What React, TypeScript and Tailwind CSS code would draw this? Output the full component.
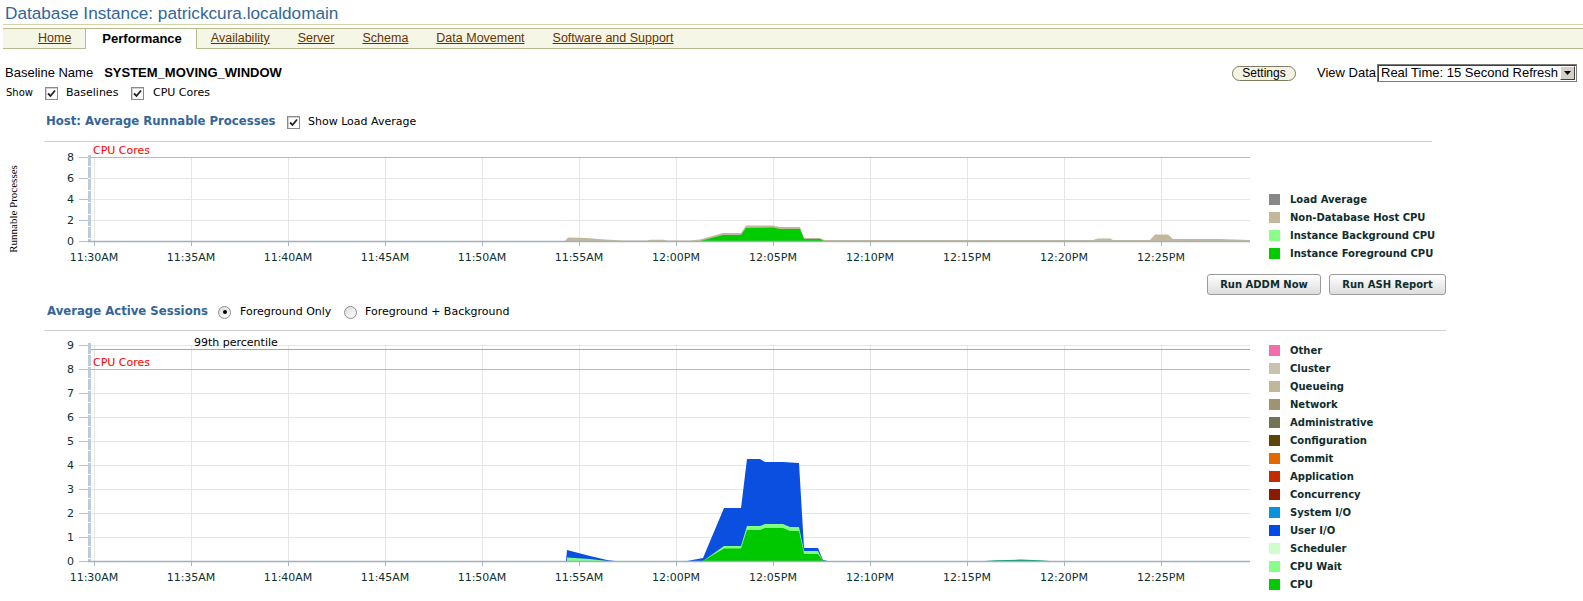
import React from "react";

const TIMES = ["11:30AM","11:35AM","11:40AM","11:45AM","11:50AM","11:55AM","12:00PM","12:05PM","12:10PM","12:15PM","12:20PM","12:25PM"];
const gx = (i: number) => 94 + 97 * i;
const P = (a: number[][]) => a.map((p) => p.join(",")).join(" ");
const V = "'DejaVu Sans', Verdana, sans-serif";
const AX = "#0f3030";

function Grid({ y0, unit, vals, top }: { y0: number; unit: number; vals: number[]; top: number }) {
  return (
    <g>
      {vals.filter((v) => v > 0).map((v) => (
        <line key={"h" + v} x1={90} x2={1250} y1={y0 - v * unit + 0.5} y2={y0 - v * unit + 0.5} stroke="#e6e6e6" />
      ))}
      {TIMES.map((_, i) => (
        <line key={"v" + i} x1={gx(i) + 0.5} x2={gx(i) + 0.5} y1={top} y2={y0} stroke="#e6e6ea" />
      ))}
    </g>
  );
}

function Axes({ y0, unit, vals, top }: { y0: number; unit: number; vals: number[]; top: number }) {
  return (
    <g>
      <line x1={89.5} x2={89.5} y1={top - 2} y2={y0 + 1} stroke="#bccada" strokeWidth={3} strokeDasharray="11 1" />
      <line x1={88} x2={1250} y1={y0 + 0.5} y2={y0 + 0.5} stroke="#a3afbd" strokeWidth={1.5} />
      {vals.map((v) => (
        <g key={v}>
          <line x1={79} x2={88} y1={y0 - v * unit + 0.5} y2={y0 - v * unit + 0.5} stroke="#b4c3d3" />
          <text x={74} y={y0 - v * unit + 4} textAnchor="end" fontFamily={V} fontSize={11} fill={AX}>{v}</text>
        </g>
      ))}
      {TIMES.map((t, i) => (
        <g key={t}>
          <line x1={gx(i) + 0.5} x2={gx(i) + 0.5} y1={y0 + 1} y2={y0 + 5} stroke="#a9b8c8" />
          <text x={gx(i)} y={y0 + 20} textAnchor="middle" fontFamily={V} fontSize={11} fill={AX}>{t}</text>
        </g>
      ))}
    </g>
  );
}

function Chart1() {
  const y0 = 241;
  const unit = 10.5;
  const tan = [[90,241],[565,241],[568,237.5],[587,238],[605,239.5],[623,240.5],[647,240.5],[650,239.8],[664,239.8],[667,240.5],[690,240.5],[700,239.5],[723,233],[741,233],[746,225.5],[773,225.5],[780,227],[800,227],[804,238],[820,238],[824,240],[1000,240],[1093,240],[1098,238.5],[1110,238.5],[1113,240],[1150,240],[1155,234.5],[1168,234.5],[1173,239],[1220,239],[1250,240],[1250,241]];
  const green = [[700,241],[723,235],[741,235],[746,228],[773,227.5],[780,229],[800,229],[804,239],[820,239],[824,241]];
  return (
    <svg width={1262} height={128} viewBox="0 142 1262 128" className="block shrink-0">
      <text transform="rotate(-90 17 209)" x={17} y={209} textAnchor="middle" fontFamily="'Liberation Serif', serif" fontSize={11} fill="#000">Runnable Processes</text>
      <Grid y0={y0} unit={unit} vals={[2, 4, 6]} top={157} />
      <line x1={90} x2={1250} y1={157.5} y2={157.5} stroke="#f2a0a0" />
      <text x={93} y={154} fontFamily={V} fontSize={11} fill="#ff0000">CPU Cores</text>
      <polygon points={P(tan)} fill="#c4b89c" />
      <polygon points={P(green)} fill="#00cc00" />
      <Axes y0={y0} unit={unit} vals={[0, 2, 4, 6, 8]} top={157} />
    </svg>
  );
}

function Chart2() {
  const y0 = 561;
  const unit = 24;
  const blueA = [[566,561],[567,550],[590,556],[607,560],[615,561]];
  const lgA = [[567,561],[567,557.5],[590,559],[607,561]];
  const blue = [[687,561],[703,558],[724,508],[741,508],[747,459],[760,459],[765,462],[783,462],[799,463],[804,548],[818,548],[823,560],[828,561]];
  const lg = [[703,561],[724,546],[741,546],[747,526],[760,526],[765,524],[783,524],[790,527],[799,527],[804,551],[818,551],[823,561]];
  const g = [[703,561],[724,548.5],[741,548.5],[747,530],[760,530],[765,528],[783,528],[790,531],[799,531],[804,554],[818,554],[823,561]];
  const teal = [[985,561],[995,560.2],[1020,559.6],[1040,560.2],[1050,561]];
  return (
    <svg width={1262} height={270} viewBox="0 331 1262 270" className="block shrink-0">
      <Grid y0={y0} unit={unit} vals={[1, 2, 3, 4, 5, 6, 7, 8, 9]} top={345} />
      <line x1={90} x2={1250} y1={349.5} y2={349.5} stroke="#a6a6a6" />
      <text x={194} y={346} fontFamily={V} fontSize={11} fill="#000">99th percentile</text>
      <line x1={90} x2={1250} y1={369.5} y2={369.5} stroke="#f2a0a0" />
      <text x={93} y={366} fontFamily={V} fontSize={11} fill="#ff0000">CPU Cores</text>
      <polygon points={P(blueA)} fill="#0a4fe0" />
      <polygon points={P(lgA)} fill="#80ff80" />
      <polygon points={P(blue)} fill="#0a4fe0" />
      <polygon points={P(lg)} fill="#80ff80" />
      <polygon points={P(g)} fill="#00c800" />
      <polygon points={P(teal)} fill="#009a70" />
      <Axes y0={y0} unit={unit} vals={[0, 1, 2, 3, 4, 5, 6, 7, 8, 9]} top={345} />
    </svg>
  );
}

function Check() {
  return (
    <span className="inline-flex w-[13px] h-[13px] shrink-0 items-center justify-center border border-[#8a8a8a] bg-white shadow-[inset_1px_1px_0_#d0d0d0]">
      <svg width="9" height="9" viewBox="0 0 9 9">
        <path d="M1 4.5 L3.5 7 L8 1.5" fill="none" stroke="#222" strokeWidth="1.8" />
      </svg>
    </span>
  );
}

function Radio({ on }: { on?: boolean }) {
  return (
    <span className="inline-flex w-[13px] h-[13px] shrink-0 items-center justify-center rounded-full border border-[#8c8c8c] bg-gradient-to-br from-[#dcdcdc] to-white">
      {on ? <span className="w-[4px] h-[4px] rounded-full bg-black" /> : null}
    </span>
  );
}

function Legend({ items }: { items: [string, string][] }) {
  return (
    <div className="flex flex-col">
      {items.map(([label, color]) => (
        <div key={label} className="h-[18px] flex items-center">
          <span className="w-[11px] h-[11px] shrink-0" style={{ backgroundColor: color }} />
          <span className="ml-[10px] text-[10px] font-bold text-[#0f2d2d] font-['DejaVu_Sans',Verdana,sans-serif] whitespace-nowrap">{label}</span>
        </div>
      ))}
    </div>
  );
}

function Tab({ children }: { children: React.ReactNode }) {
  return <a className="px-[14px] flex items-center text-[#663300] underline whitespace-nowrap">{children}</a>;
}

export default function App() {
  const legend1: [string, string][] = [
    ["Load Average", "#878787"],
    ["Non-Database Host CPU", "#c4b89c"],
    ["Instance Background CPU", "#88ff88"],
    ["Instance Foreground CPU", "#00cc00"],
  ];
  const legend2: [string, string][] = [
    ["Other", "#f26ea8"],
    ["Cluster", "#c9c2af"],
    ["Queueing", "#c2b79b"],
    ["Network", "#9f9371"],
    ["Administrative", "#717354"],
    ["Configuration", "#5c440b"],
    ["Commit", "#e46800"],
    ["Application", "#c42b00"],
    ["Concurrency", "#8b1a00"],
    ["System I/O", "#0993de"],
    ["User I/O", "#004ae7"],
    ["Scheduler", "#ccffcc"],
    ["CPU Wait", "#88ff88"],
    ["CPU", "#00cc00"],
  ];
  return (
    <div className="w-[1583px] h-[601px] overflow-hidden bg-white flex flex-col font-['Liberation_Sans',Arial,sans-serif] text-black">
      <div className="h-[24px] pl-[5px] leading-[26px] text-[17.2px] text-[#336699] whitespace-nowrap">Database Instance: patrickcura.localdomain</div>
      <div className="ml-[3px] h-px bg-[#d3d3a8]" />
      <div className="ml-[3px] mt-[3px] h-[21px] flex items-stretch border-y border-[#b9b98e] bg-[#f6f6e6] pl-[21px] text-[12.5px]">
        <Tab>Home</Tab>
        <div className="-my-px flex items-center bg-white border-x border-t border-[#b9b98e] pl-[16px] pr-[14px] text-[13px] font-bold whitespace-nowrap">Performance</div>
        <Tab>Availability</Tab>
        <Tab>Server</Tab>
        <Tab>Schema</Tab>
        <Tab>Data Movement</Tab>
        <Tab>Software and Support</Tab>
      </div>

      <div className="mt-[15px] h-[18px] flex items-center pl-[5px] pr-[6px] text-[13px]">
        <span className="whitespace-nowrap">Baseline Name</span>
        <span className="ml-[11px] font-bold whitespace-nowrap">SYSTEM_MOVING_WINDOW</span>
        <div className="ml-auto flex items-center">
          <span className="h-[15px] w-[64px] flex items-center justify-center rounded-full border border-[#7d7d5e] bg-[#f3f3e3] text-[12px]">Settings</span>
          <span className="ml-[21px] whitespace-nowrap">View Data</span>
          <div className="ml-px w-[200px] h-[18px] flex items-stretch border border-[#7a7a7a] bg-white shadow-[inset_1px_1px_0_#404040]">
            <span className="flex-1 pl-[3px] flex items-center whitespace-nowrap">Real Time: 15 Second Refresh</span>
            <span className="w-[15px] m-px flex items-center justify-center bg-[#d4d0c8] border border-t-white border-l-white border-r-[#404040] border-b-[#404040]">
              <svg width="7" height="4" viewBox="0 0 7 4"><path d="M0 0 H7 L3.5 4 Z" fill="#000" /></svg>
            </span>
          </div>
        </div>
      </div>

      <div className="mt-[4px] h-[14px] flex items-center text-[11px] text-black font-['DejaVu_Sans',Verdana,sans-serif]">
        <span className="ml-[6px] w-[39px] text-[10px] -mt-[2px]">Show</span>
        <Check />
        <span className="ml-[8px] w-[65px]">Baselines</span>
        <Check />
        <span className="ml-[9px]">CPU Cores</span>
      </div>

      <div className="mt-[15px] h-[14px] flex items-center font-['DejaVu_Sans',Verdana,sans-serif]">
        <span className="ml-[46px] w-[241px] text-[11.7px] font-bold text-[#336699] whitespace-nowrap">Host: Average Runnable Processes</span>
        <Check />
        <span className="ml-[8px] text-[11px]">Show Load Average</span>
      </div>

      <div className="mt-[12px] ml-[44px] w-[1388px] h-px bg-[#cfcfd6]" />
      <div className="h-[128px] flex">
        <Chart1 />
        <div className="ml-[7px] pt-[48px]">
          <Legend items={legend1} />
        </div>
      </div>

      <div className="mt-[4px] w-[1446px] flex justify-end gap-[8px] font-['DejaVu_Sans',Verdana,sans-serif]">
        <span className="w-[114px] h-[21px] flex items-center justify-center rounded-[3px] border border-[#9c9c9c] bg-gradient-to-b from-white to-[#dddddd] text-[10px] font-bold text-[#0f2d2d]">Run ADDM Now</span>
        <span className="w-[117px] h-[21px] flex items-center justify-center rounded-[3px] border border-[#9c9c9c] bg-gradient-to-b from-white to-[#dddddd] text-[10px] font-bold text-[#0f2d2d]">Run ASH Report</span>
      </div>

      <div className="mt-[7px] h-[20px] flex items-center font-['DejaVu_Sans',Verdana,sans-serif]">
        <span className="ml-[47px] w-[171px] text-[11.7px] font-bold text-[#336699] whitespace-nowrap">Average Active Sessions</span>
        <Radio on />
        <span className="ml-[9px] w-[104px] text-[11px]">Foreground Only</span>
        <Radio />
        <span className="ml-[8px] text-[11px]">Foreground + Background</span>
      </div>

      <div className="mt-[8px] ml-[44px] w-[1402px] h-px bg-[#cfcfd6]" />
      <div className="h-[270px] flex">
        <Chart2 />
        <div className="ml-[7px] pt-[10px]">
          <Legend items={legend2} />
        </div>
      </div>
    </div>
  );
}
